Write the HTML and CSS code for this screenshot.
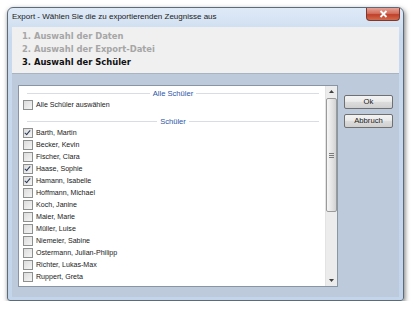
FILE: index.html
```html
<!DOCTYPE html>
<html lang="de">

<head>
    <meta charset="UTF-8">
    <meta name="viewport" content="width=device-width, initial-scale=1.0">
    <title>Export</title>
    <link rel="stylesheet" href="styles.css">
</head>

<body>

    <div class="window">
        <div class="titlebar">
            <span class="title">Export - Wählen Sie die zu exportierenden Zeugnisse aus</span>
            <span class="close">
                <svg width="9" height="8" viewBox="0 0 9 8">
                    <path d="M1.5 1 L7.5 7 M7.5 1 L1.5 7" stroke="#fff" stroke-width="1.8" />
                </svg>
            </span>
        </div>

        <div class="steps">
            <div class="step done">1. Auswahl der Daten</div>
            <div class="step done">2. Auswahl der Export-Datei</div>
            <div class="step">3. Auswahl der Schüler</div>
        </div>

        <div class="client">
            <div class="listbox">
                <div class="list">
                    <div class="group"><span>Alle Schüler</span></div>
                    <div class="item"><span class="check"></span>Alle Schüler auswählen</div>

                    <div class="group second"><span>Schüler</span></div>
                    <div class="item"><span class="check on"></span>Barth, Martin</div>
                    <div class="item"><span class="check"></span>Becker, Kevin</div>
                    <div class="item"><span class="check"></span>Fischer, Clara</div>
                    <div class="item"><span class="check on"></span>Haase, Sophie</div>
                    <div class="item"><span class="check on"></span>Hamann, Isabelle</div>
                    <div class="item"><span class="check"></span>Hoffmann, Michael</div>
                    <div class="item"><span class="check"></span>Koch, Janine</div>
                    <div class="item"><span class="check"></span>Maier, Marie</div>
                    <div class="item"><span class="check"></span>Müller, Luise</div>
                    <div class="item"><span class="check"></span>Niemeier, Sabine</div>
                    <div class="item"><span class="check"></span>Ostermann, Julian-Philipp</div>
                    <div class="item"><span class="check"></span>Richter, Lukas-Max</div>
                    <div class="item"><span class="check"></span>Ruppert, Greta</div>
                </div>
                <div class="scrollbar">
                    <div class="arrow">
                        <svg width="5" height="3" viewBox="0 0 5 3"><path d="M0 3 L2.5 0 L5 3 Z" fill="#404040" /></svg>
                    </div>
                    <div class="thumb"><span class="grip"></span></div>
                    <div class="track"></div>
                    <div class="arrow">
                        <svg width="5" height="3" viewBox="0 0 5 3"><path d="M0 0 L2.5 3 L5 0 Z" fill="#404040" /></svg>
                    </div>
                </div>
            </div>

            <div class="buttons">
                <button class="btn">Ok</button>
                <button class="btn">Abbruch</button>
            </div>
        </div>
    </div>

</body>

</html>
```

FILE: styles.css
```css
body {
    margin: 0;
    padding: 0;
    background-color: #fff;
    font-family: "Liberation Sans", Arial, sans-serif;
}

.window {
    margin: 7px 0 0 7px;
    width: 397px;
    height: 294px;
    box-sizing: border-box;
    border: 1px solid #5d6a7a;
    border-radius: 6px 6px 3px 3px;
    padding: 0 4px 3px 4px;
    background: linear-gradient(to bottom, #dfeaf7 0, #c9daee 30px, #c2d5eb 100%);
    box-shadow: 1px 2px 5px rgba(0, 0, 0, 0.55);
    display: flex;
    flex-direction: column;
}

.titlebar {
    height: 19px;
    display: flex;
    align-items: flex-start;
}

.title {
    font-size: 8px;
    color: #1a1a1a;
    line-height: 8px;
    margin-top: 5px;
    white-space: nowrap;
}

.close {
    margin-left: auto;
    margin-right: -1px;
    width: 32px;
    height: 12px;
    border: 1px solid #7a3a30;
    border-top: none;
    border-radius: 0 0 4px 4px;
    background: linear-gradient(to bottom, #e7a296 0, #d3705f 45%, #c1402b 55%, #d46a4c 100%);
    display: flex;
    align-items: center;
    justify-content: center;
}

.close svg {
    display: block;
}

.steps {
    height: 47px;
    box-sizing: border-box;
    background-color: #f0f0f0;
    border-bottom: 1px solid #a9b4c2;
    padding: 3px 0 0 10px;
}

.step {
    font-family: "DejaVu Sans", Verdana, sans-serif;
    font-weight: bold;
    font-size: 8.4px;
    line-height: 13px;
    color: #111;
}

.step.done {
    color: #a6a6a6;
}

.client {
    flex: 1;
    background-color: #bccadb;
    display: flex;
    padding: 11px 6px 10px 6px;
    gap: 6px;
}

.listbox {
    width: 320px;
    height: 202px;
    box-sizing: border-box;
    border: 1px solid #8a95a3;
    background-color: #fff;
    display: flex;
}

.list {
    flex: 1;
    overflow: hidden;
    padding-top: 1px;
}

.group {
    height: 12px;
    display: flex;
    align-items: center;
    padding: 0 6px 0 8px;
    gap: 3px;
    font-size: 7.6px;
    color: #2b55a8;
}

.group::before,
.group::after {
    content: "";
    flex: 1;
    height: 1px;
    background-color: #d7dde4;
}

.group.second {
    margin-top: 4px;
}

.item {
    height: 12px;
    display: flex;
    align-items: center;
    padding-left: 4px;
    font-size: 7.1px;
    color: #1a1a1a;
    white-space: nowrap;
}

.check {
    width: 8px;
    height: 8px;
    border: 1px solid #8e8f8f;
    background: linear-gradient(135deg, #dcdcdc 0, #f4f4f4 100%);
    margin-right: 3px;
    position: relative;
}

.check.on::after {
    content: "";
    position: absolute;
    left: 2px;
    top: 0;
    width: 2px;
    height: 5px;
    border: solid #2a3a5a;
    border-width: 0 1.5px 1.5px 0;
    transform: rotate(40deg);
}

.scrollbar {
    width: 11px;
    background-color: #ececec;
    border-left: 1px solid #e3e3e3;
    display: flex;
    flex-direction: column;
}

.arrow {
    height: 11px;
    display: flex;
    align-items: center;
    justify-content: center;
}

.thumb {
    height: 114px;
    margin: 1px 0 0 0;
    box-sizing: border-box;
    border: 1px solid #9a9a9a;
    border-radius: 2px;
    background: linear-gradient(to right, #f6f6f6 0, #e2e2e2 60%, #d2d2d2 100%);
    display: flex;
    align-items: center;
    justify-content: center;
}

.grip {
    width: 5px;
    height: 5px;
    background: repeating-linear-gradient(to bottom, #7a7a7a 0, #7a7a7a 1px, transparent 1px, transparent 2px);
}

.track {
    flex: 1;
}

.buttons {
    display: flex;
    flex-direction: column;
    gap: 5px;
    padding-top: 10px;
}

.btn {
    width: 49px;
    height: 14px;
    padding: 0;
    border: 1px solid #707070;
    border-radius: 2px;
    background: linear-gradient(to bottom, #f3f3f3 0, #ebebeb 45%, #dddddd 50%, #cfcfcf 100%);
    font-family: "Liberation Sans", Arial, sans-serif;
    font-size: 7.7px;
    color: #1a1a1a;
    line-height: 12px;
}
```
